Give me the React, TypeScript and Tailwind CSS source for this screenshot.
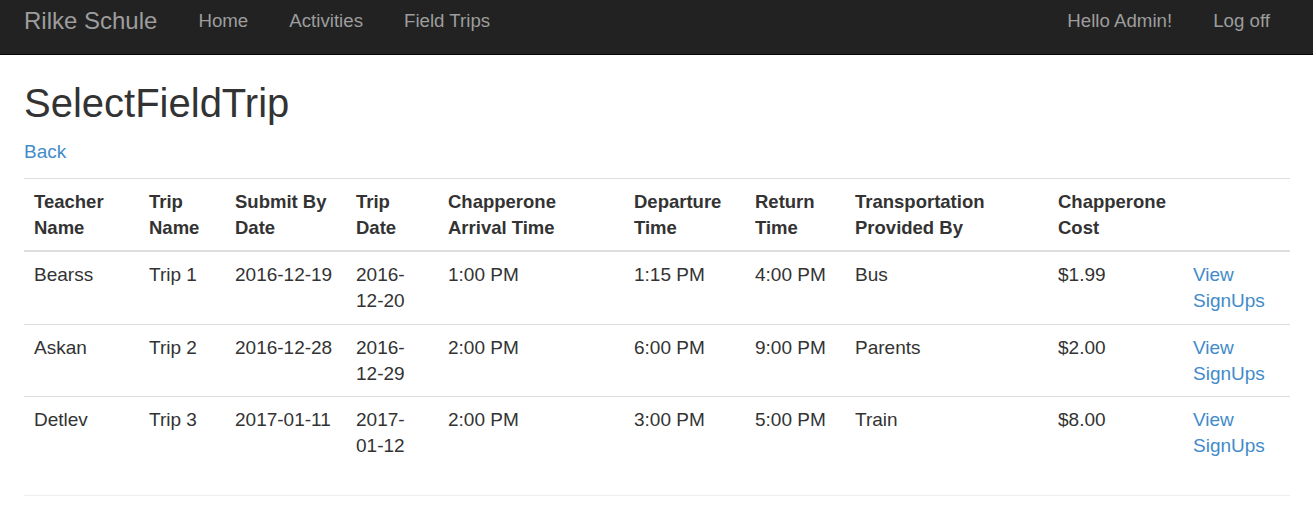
import React from "react";

const rows = [
  { t: "Bearss", n: "Trip 1", s: "2016-12-19", d: ["2016-", "12-20"], a: "1:00 PM", dep: "1:15 PM", r: "4:00 PM", tr: "Bus", c: "$1.99" },
  { t: "Askan", n: "Trip 2", s: "2016-12-28", d: ["2016-", "12-29"], a: "2:00 PM", dep: "6:00 PM", r: "9:00 PM", tr: "Parents", c: "$2.00" },
  { t: "Detlev", n: "Trip 3", s: "2017-01-11", d: ["2017-", "01-12"], a: "2:00 PM", dep: "3:00 PM", r: "5:00 PM", tr: "Train", c: "$8.00" },
];

const widths = [115, 86, 121, 92, 186, 121, 100, 203, 135, 107];

export default function App() {
  return (
    <div className="min-h-[531px] bg-white text-[#333] text-[19px] leading-[26px]" style={{ fontFamily: '"Liberation Sans", Arial, sans-serif' }}>
      <nav className="h-[55px] bg-[#222] border-b border-[#080808] flex items-start pl-[24px] pr-[23px] text-[#9d9d9d]">
        <div className="flex items-center h-[42px] w-full">
          <span className="text-[24px] mr-[41px]">Rilke Schule</span>
          <div className="flex gap-[41px] text-[18.7px]">
            <span>Home</span>
            <span>Activities</span>
            <span>Field Trips</span>
          </div>
          <div className="ml-auto flex gap-[41px] text-[18.7px] pr-[20px]">
            <span>Hello Admin!</span>
            <span>Log off</span>
          </div>
        </div>
      </nav>
      <main className="pl-[24px] pr-[23px]">
        <h1 className="text-[40px] leading-[46px] mt-[25px] mb-[13px] text-[#333]">SelectFieldTrip</h1>
        <p className="mb-[13px]">
          <a className="text-[#428bca]">Back</a>
        </p>
        <table className="w-full table-fixed border-collapse mb-[26px]">
          <colgroup>
            {widths.map((w, i) => (
              <col key={i} style={{ width: w }} />
            ))}
          </colgroup>
          <thead>
            <tr className="border-t border-[#ddd]">
              {["Teacher Name", "Trip Name", "Submit By Date", "Trip Date", "Chapperone Arrival Time", "Departure Time", "Return Time", "Transportation Provided By", "Chapperone Cost", ""].map((h, i) => (
                <th key={i} className="text-left align-bottom font-bold text-[18.5px] px-[10px] pt-[10px] pb-[9px] border-b-2 border-[#ddd]">
                  {h}
                </th>
              ))}
            </tr>
          </thead>
          <tbody>
            {rows.map((r, i) => (
              <tr key={i} className={i > 0 ? "border-t border-[#ddd]" : ""}>
                <td className="px-[10px] pt-[10px] pb-[9.5px] align-top">{r.t}</td>
                <td className="px-[10px] pt-[10px] pb-[9.5px] align-top">{r.n}</td>
                <td className="px-[10px] pt-[10px] pb-[9.5px] align-top">{r.s}</td>
                <td className="px-[10px] pt-[10px] pb-[9.5px] align-top">{r.d[0]}<br />{r.d[1]}</td>
                <td className="px-[10px] pt-[10px] pb-[9.5px] align-top">{r.a}</td>
                <td className="px-[10px] pt-[10px] pb-[9.5px] align-top">{r.dep}</td>
                <td className="px-[10px] pt-[10px] pb-[9.5px] align-top">{r.r}</td>
                <td className="px-[10px] pt-[10px] pb-[9.5px] align-top">{r.tr}</td>
                <td className="px-[10px] pt-[10px] pb-[9.5px] align-top">{r.c}</td>
                <td className="px-[10px] pt-[10px] pb-[9.5px] align-top text-[#428bca]">View<br />SignUps</td>
              </tr>
            ))}
          </tbody>
        </table>
        <hr className="border-t border-[#eee]" />
      </main>
    </div>
  );
}
